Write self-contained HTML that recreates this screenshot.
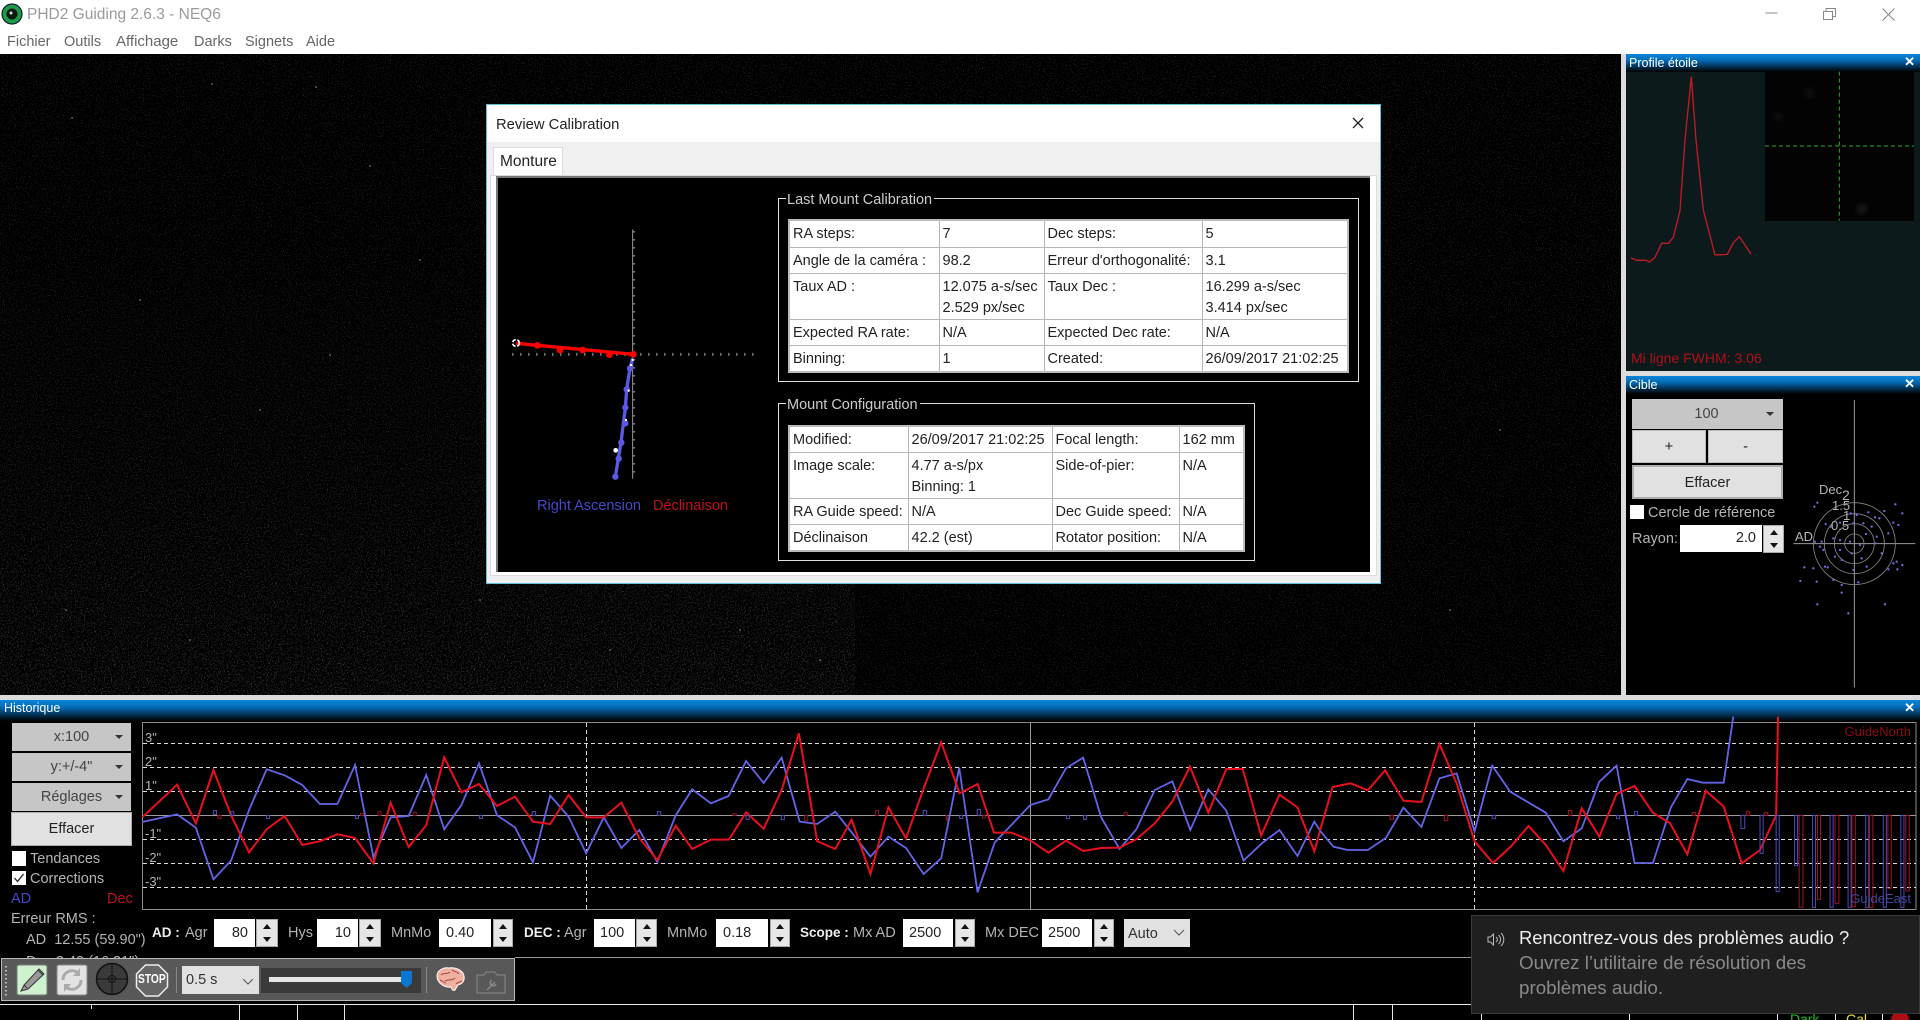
<!DOCTYPE html>
<html><head><meta charset="utf-8"><style>
html,body{margin:0;padding:0;background:#000}
#r{position:relative;width:1920px;height:1020px;overflow:hidden;background:#000;font-family:"Liberation Sans",sans-serif;font-size:14.5px}
.a,.t{position:absolute}
.t{white-space:nowrap;line-height:18px}
.tb{position:absolute;background:linear-gradient(#0a86dc,#056bb4 35%,#000);color:#fff;font-size:12.5px;line-height:16px}
.g{color:#b4b4b4}
.btn{position:absolute;background:#c6c6c6;color:#444;text-align:center;box-sizing:border-box}
.lt{background:#e1e1e1;border:1px solid #adadad;color:#222}
.inp{position:absolute;background:#fff;color:#222;box-sizing:border-box;line-height:28px}
.sp{position:absolute;background:#e6e6e6;box-sizing:border-box;border:1px solid #aaa}
.sp:before{content:"";position:absolute;left:50%;top:4px;margin-left:-4px;border:4px solid transparent;border-top:0;border-bottom:5px solid #111}
.sp:after{content:"";position:absolute;left:50%;bottom:4px;margin-left:-4px;border:4px solid transparent;border-bottom:0;border-top:5px solid #111}
table{position:absolute;border-collapse:collapse;table-layout:fixed;background:#fff;color:#222;font-size:14.5px;border:2px solid #bbb}
td{border:1px solid #b5b5b5;padding:3px 0 0 3px;vertical-align:top;line-height:21px;white-space:nowrap;overflow:hidden;box-sizing:border-box}
.gb{position:absolute;border:1px solid #ddd;box-sizing:border-box}
.gl{position:absolute;background:#000;color:#ccc;padding:0 2px 0 1px;line-height:18px;white-space:nowrap}
svg{position:absolute;left:0;top:0;overflow:visible}
b{font-size:13.5px}
</style></head><body><div id="r">

<!-- title + menu -->
<div class="a" style="left:0;top:0;width:1920px;height:54px;background:#fff"></div>
<svg width="30" height="30"><circle cx="12" cy="14" r="10" fill="#1f9a47" stroke="#123" stroke-width="1.2"/><circle cx="12" cy="14" r="5.5" fill="#0a1a10"/><circle cx="11" cy="13" r="1.5" fill="#ddd"/></svg>
<div class="t" style="left:27px;top:6px;font-size:15.5px;color:#9a9a9a">PHD2 Guiding 2.6.3 - NEQ6</div>
<div class="t" style="left:7px;top:33px;color:#666">Fichier</div>
<div class="t" style="left:64px;top:33px;color:#666">Outils</div>
<div class="t" style="left:116px;top:33px;color:#666;font-size:15px">Affichage</div>
<div class="t" style="left:194px;top:33px;color:#666">Darks</div>
<div class="t" style="left:245px;top:33px;color:#666">Signets</div>
<div class="t" style="left:306px;top:33px;color:#666">Aide</div>
<svg width="1920" height="30" style="pointer-events:none"><path d="M1765.5 13h12" stroke="#888" fill="none"/><path d="M1823.5 11.5h9v8h-9zM1826 11.500v-3h9.500v8h-3" stroke="#888" fill="none"/><path d="M1882.500 8.500l12 12M1894.500 8.500l-12 12" stroke="#888" fill="none"/></svg>

<!-- star field noise -->
<svg width="1920" height="1020"><defs><filter id="n" x="0" y="0" width="100%" height="100%"><feTurbulence type="fractalNoise" baseFrequency="0.85" numOctaves="2" seed="4"/><feColorMatrix values="0 0 0 0 1 0 0 0 0 1 0 0 0 0 1 7 0 0 0 -4.100"/></filter>
<filter id="m" x="0" y="0" width="100%" height="100%"><feTurbulence type="fractalNoise" baseFrequency="0.7" numOctaves="2" seed="9"/><feColorMatrix values="0 0 0 0 1 0 0 0 0 1 0 0 0 0 1 7 0 0 0 -3.900"/></filter>
<linearGradient id="fg" x1="0" y1="0" x2="0" y2="1"><stop offset="0" stop-color="#000"/><stop offset="1" stop-color="#fff"/></linearGradient>
<mask id="fm" maskUnits="userSpaceOnUse" x="0" y="250" width="855" height="445"><rect x="0" y="250" width="855" height="445" fill="url(#fg)"/></mask></defs>
<rect x="0" y="54" width="1620" height="641" filter="url(#n)" opacity=".13"/>
<g mask="url(#fm)"><rect x="0" y="250" width="855" height="445" filter="url(#m)" opacity=".16"/></g>
<path d="M212 84h.1M316 87h.1M72 118h.1M370 166h.1M140 300h.1M420 260h.1M260 410h.1M330 355h.1M66 610h.1M190 640h.1M480 600h.1M610 650h.1M740 630h.1M820 660h.1M1500 430h.1M1450 610h.1" stroke="#555" stroke-width="2" stroke-linecap="round"/></svg>

<!-- right column frames -->
<div class="a" style="left:1621px;top:54px;width:5px;height:646px;background:#dcdcdc"></div>
<div class="a" style="left:1626px;top:371px;width:294px;height:5px;background:#dcdcdc"></div>
<div class="a" style="left:0;top:695px;width:1920px;height:5px;background:#dcdcdc"></div>

<!-- star profile -->
<div class="a" style="left:1626px;top:72px;width:294px;height:299px;background:#0c1a1c"></div>
<div class="tb" style="left:1626px;top:54px;width:294px;height:18px;padding:1px 0 0 3px;box-sizing:border-box">Profile étoile</div>
<div class="t" style="right:5px;top:54px;color:#fff;font-weight:bold;font-size:13px;line-height:16px">✕</div>
<div class="a" style="left:1765px;top:72px;width:149px;height:149px;background:radial-gradient(circle at 65% 92%,#151515 0,#151515 2px,transparent 8px),radial-gradient(circle at 9% 30%,#101010 0,transparent 7px),radial-gradient(circle at 30% 14%,#101010 0,transparent 8px),#030303"></div>
<svg width="1920" height="400"><g transform="translate(1620,0) scale(.33333)">
<path d="M435 438H882M658 215V662" stroke="#2ea82e" stroke-width="3" stroke-dasharray="12 9" fill="none"/>
<polyline points="33,774 52,781 78,781 88,786 105,772 125,730 145,730 160,712 180,632 195,420 214,230 228,420 250,630 285,765 322,763 340,728 358,710 393,762" fill="none" stroke="#c01a28" stroke-width="4"/></g></svg>
<div class="t" style="left:1631px;top:349px;font-size:14px;color:#b01018">Mi ligne FWHM: 3.06</div>

<!-- target -->
<div class="tb" style="left:1626px;top:376px;width:294px;height:18px;padding:1px 0 0 3px;box-sizing:border-box">Cible</div>
<div class="t" style="right:5px;top:376px;color:#fff;font-weight:bold;font-size:13px;line-height:16px">✕</div>
<div class="btn" style="left:1632px;top:399px;width:151px;height:30px;line-height:30px;padding-right:2px">100<span class="a" style="right:9px;top:13px;border:4px solid transparent;border-bottom:0;border-top:4px solid #333"></span></div>
<div class="btn" style="left:1632px;top:430px;width:74px;height:33px;line-height:33px;background:#e1e1e1;border:1px solid #bbb;color:#222">+</div>
<div class="btn" style="left:1708px;top:430px;width:75px;height:33px;line-height:33px;background:#e1e1e1;border:1px solid #bbb;color:#222">-</div>
<div class="btn lt" style="left:1632px;top:465px;width:151px;height:34px;line-height:32px;border-width:2px">Effacer</div>
<div class="a" style="left:1630px;top:505px;width:14px;height:14px;background:#fff"></div>
<div class="t g" style="left:1648px;top:504px">Cercle de référence</div>
<div class="t g" style="left:1632px;top:530px">Rayon:</div>
<div class="inp" style="left:1680px;top:525px;width:82px;height:27px;text-align:right;padding-right:6px;line-height:27px">2.0</div>
<div class="sp" style="left:1763px;top:525px;width:21px;height:28px"></div>
<svg width="1920" height="1020"><g transform="translate(1620,370) scale(.33333)" fill="none">
<path d="M703 90V952M520 521H886" stroke="#999" stroke-width="3"/>
<circle cx="703" cy="521" r="123" stroke="#888" stroke-width="2.500"/><circle cx="703" cy="521" r="90" stroke="#888" stroke-width="2.500"/><circle cx="703" cy="521" r="60" stroke="#888" stroke-width="2.500"/><circle cx="703" cy="521" r="29" stroke="#888" stroke-width="2.500"/>
<path d="M592 398h.1M583 410h.1M826 403h.1M847 430h.1M793 423h.1M745 427h.1M710 435h.1M692 430h.1M765 442h.1M778 445h.1M730 460h.1M755 470h.1M820 458h.1M835 465h.1M805 490h.1M738 492h.1M700 460h.1M660 458h.1M617 462h.1M632 470h.1M605 515h.1M585 515h.1M640 505h.1M660 510h.1M690 515h.1M720 525h.1M765 520h.1M785 550h.1M830 575h.1M847 585h.1M820 580h.1M805 598h.1M832 598h.1M553 592h.1M580 595h.1M615 590h.1M623 592h.1M665 570h.1M695 550h.1M725 565h.1M660 540h.1M645 560h.1M700 600h.1M740 590h.1M590 635h.1M541 633h.1M640 630h.1M665 645h.1M715 637h.1M665 668h.1M592 703h.1M795 703h.1M685 730h.1M610 540h.1M600 530h.1M770 500h.1" stroke="#6a6ad8" stroke-width="7" stroke-linecap="round"/>
</g></svg>
<div class="t g" style="left:1819px;top:481px;font-size:13px">Dec</div>
<div class="t g" style="left:1842px;top:486px;font-size:14px">2</div>
<div class="t g" style="left:1832px;top:497px;font-size:13px">1.5</div>
<div class="t g" style="left:1843px;top:507px;font-size:13px">1</div>
<div class="t g" style="left:1831px;top:517px;font-size:13px">0.5</div>
<div class="t g" style="left:1795px;top:528px;font-size:13px">AD</div>

<!-- Historique -->
<div class="tb" style="left:0;top:700px;width:1920px;height:21px;padding:0 0 0 4px;box-sizing:border-box">Historique</div>
<div class="t" style="right:5px;top:700px;color:#fff;font-weight:bold;font-size:13px;line-height:16px">✕</div>
<div class="btn" style="left:12px;top:723px;width:119px;height:28px;line-height:29px">x:100<span class="a" style="right:8px;top:12px;border:4px solid transparent;border-bottom:0;border-top:4px solid #333"></span></div>
<div class="btn" style="left:12px;top:753px;width:119px;height:28px;line-height:29px">y:+/-4"<span class="a" style="right:8px;top:12px;border:4px solid transparent;border-bottom:0;border-top:4px solid #333"></span></div>
<div class="btn" style="left:12px;top:783px;width:119px;height:28px;line-height:29px">Réglages<span class="a" style="right:8px;top:12px;border:4px solid transparent;border-bottom:0;border-top:4px solid #333"></span></div>
<div class="btn lt" style="left:11px;top:812px;width:121px;height:34px;line-height:33px">Effacer</div>
<div class="a" style="left:12px;top:851px;width:14px;height:15px;background:#fff"></div>
<div class="t g" style="left:30px;top:850px">Tendances</div>
<div class="a" style="left:12px;top:871px;width:14px;height:14px;background:#fff"></div>
<svg width="40" height="900"><path d="M14.500 878l3 3.500 6-7.500" stroke="#222" stroke-width="1.300" fill="none"/></svg>
<div class="t" style="left:30px;top:870px;color:#b4b4b4">Corrections</div>
<div class="t" style="left:11px;top:890px;color:#4646c8">AD</div>
<div class="t" style="left:107px;top:890px;color:#c01020">Dec</div>
<div class="t g" style="left:11px;top:910px">Erreur RMS :</div>
<div class="t g" style="left:26px;top:931px">AD&nbsp; 12.55 (59.90")</div>
<div class="t g" style="left:26px;top:953px">Dec 3.42 (16.31")</div>

<!-- graph -->
<svg width="1920" height="1020">
<path d="M142.500 722.500H1916V909.500H142.500Z" stroke="#8c8c8c" fill="none"/>
<path d="M143 743.500H1916M143 767.500H1916M143 791.500H1916M143 839.500H1916M143 863.500H1916M143 887.500H1916" stroke="#ddd" stroke-dasharray="4 3" fill="none"/>
<path d="M143 815.500H1916" stroke="#9a9a9a" fill="none"/>
<path d="M586.500 723V909M1474.500 723V909" stroke="#ddd" stroke-dasharray="4 3" fill="none"/>
<path d="M1030.500 723V909" stroke="#999" fill="none"/>
<g fill="none" stroke-linejoin="miter">
<g transform="matrix(.38265,0,0,.33333,140,710)">
<polyline vector-effect="non-scaling-stroke" stroke="#6464e6" stroke-width="1.800" points="6,336 97,313 146,353 192,508 238,452 285,300 331,178 378,196 424,225 470,282 516,282 562,165 610,442 655,322 702,318 748,195 795,358 840,285 886,160 933,316 980,352 1027,457 1072,257 1120,320 1166,430 1212,322 1258,414 1305,360 1352,456 1400,316 1443,238 1492,280 1538,258 1542,250"/>
<polyline vector-effect="non-scaling-stroke" stroke="#e8101c" stroke-width="2" points="6,322 97,224 146,340 192,180 238,316 285,427 331,358 378,318 424,405 470,394 516,373 562,384 610,460 655,278 702,411 748,346 795,142 840,247 886,222 933,288 980,260 1027,335 1072,342 1120,255 1166,322 1212,322 1258,278 1305,385 1352,450 1400,347 1443,417 1492,389 1538,389 1542,384"/>
<path vector-effect="non-scaling-stroke" stroke="#5050b0" d="M192 302h8v11h-8zM237 305h8v11h-8zM331 316h8v9h-8zM563 316h8v9h-8zM887 316h8v9h-8zM1025 305h9v11h-9zM1352 305h9v11h-9z"/>
<path vector-effect="non-scaling-stroke" stroke="#8a1420" d="M204 316h8v9h-8zM576 310h8v6h-8zM622 305h8v11h-8zM714 307h8v9h-8z"/>
</g>
<g transform="matrix(.38265,0,0,.33333,730,710)">
<polyline vector-effect="non-scaling-stroke" stroke="#6464e6" stroke-width="1.800" points="0,250 42,153 88,219 135,143 182,335 228,342 275,305 320,370 367,440 414,380 460,414 506,492 552,445 599,173 647,547 692,397 785,285 832,268 878,175 923,143 970,322 1018,417 1062,358 1110,240 1156,214 1203,360 1250,238 1297,302 1342,452 1390,400 1436,360 1483,438 1527,335 1542,362"/>
<polyline vector-effect="non-scaling-stroke" stroke="#e8101c" stroke-width="2" points="0,384 42,307 88,356 135,240 180,70 228,394 275,417 318,329 367,492 414,292 460,385 506,235 552,97 600,250 647,222 690,368 735,368 785,391 832,428 878,392 923,423 970,414 1018,413 1062,388 1110,340 1156,275 1202,170 1250,308 1297,177 1340,177 1388,377 1436,254 1483,292 1527,424 1542,362"/>
<path vector-effect="non-scaling-stroke" stroke="#5050b0" d="M42 316h8v12h-8zM134 316h8v13h-8zM505 302h9v14h-9zM600 316h8v9h-8zM646 298h9v18h-9zM879 316h8v10h-8zM924 316h8v12h-8z"/>
<path vector-effect="non-scaling-stroke" stroke="#8a1420" d="M8 311h8v5h-8zM195 316h8v16h-8zM380 301h8v15h-8zM565 316h3v15h-3zM660 316h8v8h-8zM1030 307h8v9h-8z"/>
</g>
<g transform="matrix(.38265,0,0,.33333,1320,700)">
<polyline vector-effect="non-scaling-stroke" stroke="#6464e6" stroke-width="1.800" points="0,392 35,440 72,450 125,450 172,414 218,323 265,381 312,235 357,220 404,394 450,197 497,275 590,338 636,424 684,385 730,245 775,197 822,489 870,489 917,322 960,237 1000,248 1055,248 1080,50"/>
<polyline vector-effect="non-scaling-stroke" stroke="#e8101c" stroke-width="2" points="0,392 33,261 80,250 125,271 170,211 218,302 265,306 312,132 357,250 404,424 452,489 500,438 545,378 590,435 636,513 684,325 730,410 775,282 822,258 870,338 915,370 960,463 1008,272 1055,320 1102,490 1150,450 1192,346 1197,50"/>
<path vector-effect="non-scaling-stroke" stroke="#4a4ab8" d="M450 346h9v10h-9zM775 346h8v10h-8zM822 334h8v12h-8zM1100 346h10v39h-10zM1150 346h8v114h-8zM1192 346h8v229h-8zM1240 346h8v151h-8zM1287 346h8v276h-8zM1333 346h8v276h-8zM1380 346h8v276h-8zM1426 346h8v276h-8zM1472 346h8v276h-8zM1518 346h8v276h-8z"/>
<path vector-effect="non-scaling-stroke" stroke="#a0141e" d="M183 346h9v12h-9zM325 346h9v16h-9zM649 332h9v14h-9zM973 338h9v8h-9zM1114 334h9v12h-9zM1161 338h9v8h-9zM1252 346h10v276h-10zM1300 346h8v252h-8zM1346 346h10v264h-10zM1390 346h9v274h-9zM1436 346h9v276h-9zM1484 346h9v219h-9zM1531 346h9v227h-9z"/>
</g></g></svg>
<div class="t g" style="left:145px;top:729px;font-size:13px">3"</div>
<div class="t g" style="left:145px;top:753px;font-size:13px">2"</div>
<div class="t g" style="left:145px;top:777px;font-size:13px">1"</div>
<div class="t g" style="left:145px;top:825px;font-size:13px">-1"</div>
<div class="t g" style="left:145px;top:849px;font-size:13px">-2"</div>
<div class="t g" style="left:145px;top:873px;font-size:13px">-3"</div>
<div class="t" style="right:9px;top:723px;font-size:13px;color:#8a0c14">GuideNorth</div>
<div class="t" style="right:9px;top:890px;font-size:13px;color:#46469c">GuideEast</div>

<!-- control row -->
<div class="t" style="left:152px;top:924px;color:#eee"><b>AD :</b></div><div class="t g" style="left:185px;top:924px">Agr</div>
<div class="inp" style="left:214px;top:919px;width:41px;height:28px;text-align:right;padding-right:7px">80</div><div class="sp" style="left:256px;top:919px;width:22px;height:28px"></div>
<div class="t g" style="left:288px;top:924px">Hys</div>
<div class="inp" style="left:317px;top:919px;width:41px;height:28px;text-align:right;padding-right:7px">10</div><div class="sp" style="left:359px;top:919px;width:22px;height:28px"></div>
<div class="t g" style="left:391px;top:924px">MnMo</div>
<div class="inp" style="left:439px;top:919px;width:52px;height:28px;padding-left:7px">0.40</div><div class="sp" style="left:493px;top:919px;width:20px;height:28px"></div>
<div class="t" style="left:524px;top:924px;color:#eee"><b>DEC :</b></div><div class="t g" style="left:564px;top:924px">Agr</div>
<div class="inp" style="left:594px;top:919px;width:41px;height:28px;padding-left:6px">100</div><div class="sp" style="left:636px;top:919px;width:21px;height:28px"></div>
<div class="t g" style="left:667px;top:924px">MnMo</div>
<div class="inp" style="left:716px;top:919px;width:52px;height:28px;padding-left:7px">0.18</div><div class="sp" style="left:770px;top:919px;width:20px;height:28px"></div>
<div class="t" style="left:800px;top:924px;color:#eee"><b>Scope :</b></div><div class="t g" style="left:853px;top:924px">Mx AD</div>
<div class="inp" style="left:903px;top:919px;width:50px;height:28px;padding-left:6px">2500</div><div class="sp" style="left:955px;top:919px;width:20px;height:28px"></div>
<div class="t g" style="left:985px;top:924px">Mx DEC</div>
<div class="inp" style="left:1042px;top:919px;width:50px;height:28px;padding-left:6px">2500</div><div class="sp" style="left:1094px;top:919px;width:20px;height:28px"></div>
<div class="btn" style="left:1124px;top:919px;width:66px;height:28px;line-height:30px;background:#e1e1e1;color:#333;text-align:left;padding-left:4px">Auto</div>
<svg width="1920" height="1020"><path d="M1174 930l5 5 5-5" stroke="#555" fill="none"/></svg>

<!-- lines at bottom -->
<div class="a" style="left:515px;top:957px;width:956px;height:1px;background:#999"></div>
<div class="a" style="left:0;top:1004px;width:1920px;height:1px;background:#e8e8e8"></div>
<svg width="1920" height="1020"><path d="M91.500 1005v4M239.500 1005v15M297.500 1005v15M344.500 1005v15M1353.500 1005v15M1392.500 1005v15M1481.500 1005v15M1629.500 1005v15M1777.500 1005v15M1835.500 1005v15M1882.500 1005v15" stroke="#e8e8e8" fill="none"/></svg>
<div class="t" style="left:1790px;top:1010px;color:#22c022;font-size:14px">Dark</div>
<div class="t" style="left:1846px;top:1010px;color:#e8e020;font-size:14px">Cal</div>
<div class="a" style="left:1891px;top:1011px;width:18px;height:18px;border-radius:50%;background:#b00c14"></div>

<!-- toolbar -->
<div class="a" style="left:1px;top:958px;width:514px;height:43px;background:#585858;border:1px solid #b8b8b8;box-sizing:border-box"></div>
<svg width="600" height="1020">
<path d="M6 966v30" stroke="#ddd" stroke-width="1.500" stroke-dasharray="1.500 2.500"/>
<rect x="17" y="965" width="30" height="30" rx="2" fill="#cdf2cd" stroke="#777"/>
<path d="M21 991l3-6 15-16 5 5-16 15zM24 985l3 3M38 970l5 5" fill="#999" stroke="#333"/>
<rect x="57" y="965" width="30" height="30" rx="2" fill="#e3e3e3" stroke="#888"/>
<path d="M63 980a9 9 0 0 1 15-7M81 980a9 9 0 0 1-15 7" fill="none" stroke="#aaa" stroke-width="3"/><path d="M80 968v8h-7zM64 992v-8h7z" fill="#aaa"/>
<circle cx="112" cy="979" r="15.500" fill="#3a3a3a" stroke="#111" stroke-width="1.500"/><circle cx="112" cy="979" r="3.500" fill="none" stroke="#111"/><path d="M96 979h32M112 963v32" stroke="#111"/>
<path d="M145.500 965h13l9 9v13l-9 9h-13l-9-9v-13z" fill="#666" stroke="#eee" stroke-width="1.500"/>
<rect x="176" y="967" width="1" height="26" fill="#888"/><rect x="426" y="967" width="1" height="26" fill="#888"/>
<rect x="182" y="966" width="77" height="28" fill="#e1e1e1"/><path d="M243 979l5 5 5-5" stroke="#555" fill="none"/>
<rect x="261" y="968" width="160" height="25" fill="#3a3a3a"/><rect x="269" y="977" width="133" height="5" fill="#e6e6e6"/>
<path d="M401 971h11v12l-5.500 5-5.500-5z" fill="#0a78d0"/>
<path d="M437 976c0-6 7-9 12-8 6-1 14 2 15 8 1 5-2 8-6 9l-3 5c-2 1-3 0-4-3-5 1-14-3-14-11z" fill="#f0b0a0" stroke="#fff"/>
<path d="M441 975c3-3 6 0 9-3M445 981c4-2 7 0 10-3M452 970c2 2 5 1 7 4M440 980c3 1 4 3 6 3M456 984c2-2 4-2 6-3" fill="none" stroke="#a04a40"/>
<path d="M477 975h7l2-3h9l2 3h8v18h-28z" fill="#585858" stroke="#888"/><path d="M487 990l8-8M492 980a3 3 0 1 0 4 4" stroke="#888" fill="none" stroke-width="1.500"/>
</svg>
<div class="t" style="left:152px;top:970px;color:#fff;font-weight:bold;font-size:12.5px;transform:translate(-14px,0) scaleX(.82);transform-origin:left">STOP</div>
<div class="t" style="left:186px;top:971px;color:#333">0.5 s</div>

<!-- notification -->
<div class="a" style="left:1471px;top:915px;width:449px;height:99px;background:#1f1f1f;border:1px solid #3a3a3a;box-sizing:border-box"></div>
<svg width="1920" height="1020"><path d="M1488 937h2.500l3-3v11l-3-3H1488zM1496 937a3 3 0 0 1 0 5M1498.500 935a6 6 0 0 1 0 9M1501 933a9 9 0 0 1 0 13" fill="none" stroke="#bbb"/></svg>
<div class="t" style="left:1519px;top:927px;font-size:18.400px;color:#eee;line-height:22px">Rencontrez-vous des problèmes audio ?</div>
<div class="t" style="left:1519px;top:950px;font-size:18.800px;color:#8a8a8a;line-height:25px">Ouvrez l’utilitaire de résolution des<br>problèmes audio.</div>

<!-- dialog -->
<div class="a" style="left:486px;top:104px;width:895px;height:480px;background:#f0f0f0;border:1px solid #5ec0d8;box-sizing:border-box"></div>
<div class="a" style="left:487px;top:105px;width:893px;height:37px;background:#fff"></div>
<div class="t" style="left:496px;top:116px;color:#222;font-size:14.800px">Review Calibration</div>
<svg width="1920" height="200"><path d="M1353 118l10 10M1363 118l-10 10" stroke="#222" stroke-width="1.300" fill="none"/></svg>
<div class="a" style="left:493px;top:147px;width:70px;height:29px;background:#fff;border:1px solid #dcdcdc;border-bottom:0;box-sizing:border-box"></div>
<div class="t" style="left:500px;top:153px;color:#222;font-size:15.500px">Monture</div>
<div class="a" style="left:490px;top:175px;width:887px;height:401px;background:#fff;border:1px solid #dcdcdc;box-sizing:border-box"></div>
<div class="a" style="left:496px;top:176px;width:874px;height:396px;background:#000;border:2px solid #777;border-right:0;border-bottom:0;box-sizing:border-box"></div>
<svg width="1920" height="1020"><g transform="translate(480,100) scale(.33333)" fill="none">
<path d="M458 388V1136" stroke="#999" stroke-width="3"/>
<path d="M462 394V1136" stroke="#aaa" stroke-width="7" stroke-dasharray="3 21"/>
<path d="M97 763H822" stroke="#aaa" stroke-width="9" stroke-dasharray="3 21"/>
<path d="M460 763L108 730" stroke="#f00" stroke-width="10"/>
<path d="M460 763h.1M388 764h.1M308 750h.1M240 750h.1M172 736h.1" stroke="#f00" stroke-width="20" stroke-linecap="round"/>
<circle cx="108" cy="729" r="10" stroke="#fff" stroke-width="5" stroke-dasharray="12 5"/>
<polyline points="458,775 450,805 440,868 436,925 430,970 423,1028 415,1076 406,1130" stroke="#5a5ae6" stroke-width="10"/>
<path d="M450 805h.1M440 868h.1M436 923h.1M436 970h.1M424 1028h.1M416 1076h.1M406 1130h.1" stroke="#5a5ae6" stroke-width="19" stroke-linecap="round"/>
<path d="M407 1051h.1" stroke="#fff" stroke-width="14" stroke-linecap="round"/>
<path d="M458 780h.1M453 795h.1M446 872h.1M438 960h.1" stroke="#fff" stroke-width="7" stroke-linecap="round"/>
</g></svg>
<div class="t" style="left:537px;top:497px;color:#4848c8">Right Ascension</div>
<div class="t" style="left:653px;top:497px;color:#c0101c">Déclinaison</div>

<div class="gb" style="left:778px;top:198px;width:581px;height:184px"></div>
<div class="gl" style="left:786px;top:191px">Last Mount Calibration</div>
<table style="left:788px;top:219px;width:559px;height:153px">
<colgroup><col style="width:150px"><col style="width:105px"><col style="width:158px"><col style="width:146px"></colgroup>
<tr style="height:27px"><td>RA steps:</td><td>7</td><td>Dec steps:</td><td>5</td></tr>
<tr style="height:26px"><td>Angle de la caméra :</td><td>98.2</td><td>Erreur d'orthogonalité:</td><td>3.1</td></tr>
<tr style="height:46px"><td>Taux AD :</td><td>12.075 a-s/sec<br>2.529 px/sec</td><td>Taux Dec :</td><td>16.299 a-s/sec<br>3.414 px/sec</td></tr>
<tr style="height:26px"><td>Expected RA rate:</td><td>N/A</td><td>Expected Dec rate:</td><td>N/A</td></tr>
<tr style="height:27px"><td>Binning:</td><td>1</td><td>Created:</td><td>26/09/2017 21:02:25</td></tr>
</table>

<div class="gb" style="left:778px;top:403px;width:477px;height:158px"></div>
<div class="gl" style="left:786px;top:396px">Mount Configuration</div>
<table style="left:788px;top:425px;width:455px;height:125px">
<colgroup><col style="width:119px"><col style="width:144px"><col style="width:127px"><col style="width:65px"></colgroup>
<tr style="height:26px"><td>Modified:</td><td>26/09/2017 21:02:25</td><td>Focal length:</td><td>162 mm</td></tr>
<tr style="height:46px"><td>Image scale:</td><td>4.77 a-s/px<br>Binning: 1</td><td>Side-of-pier:</td><td>N/A</td></tr>
<tr style="height:26px"><td>RA Guide speed:</td><td>N/A</td><td>Dec Guide speed:</td><td>N/A</td></tr>
<tr style="height:27px"><td>Déclinaison</td><td>42.2 (est)</td><td>Rotator position:</td><td>N/A</td></tr>
</table>

</div></body></html>
